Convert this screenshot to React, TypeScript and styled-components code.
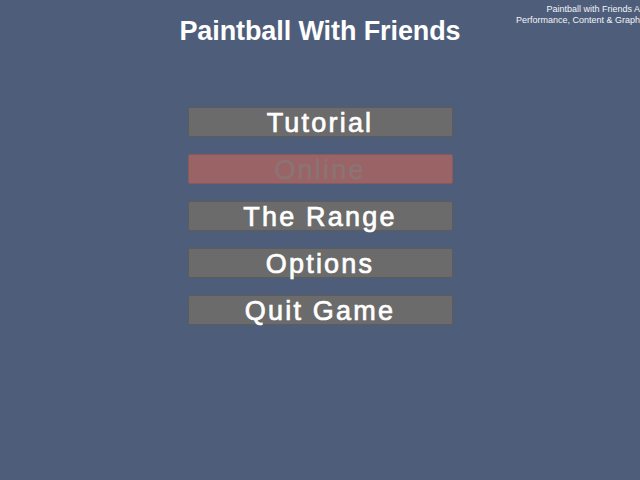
import React from 'react'
import styled, { createGlobalStyle } from 'styled-components'

const menuItems = [
  { label: 'Tutorial', disabled: false },
  { label: 'Online', disabled: true },
  { label: 'The Range', disabled: false },
  { label: 'Options', disabled: false },
  { label: 'Quit Game', disabled: false },
]

const App = () => {
  return (
    <Screen>
      <GlobalStyle />
      <BuildInfo>
        <div>Paintball with Friends A</div>
        <div>Performance, Content &amp; Graph</div>
      </BuildInfo>
      <Title>Paintball With Friends</Title>
      <Menu>
        {menuItems.map((item) => (
          <MenuButton key={item.label} $disabled={item.disabled}>
            {item.label}
          </MenuButton>
        ))}
      </Menu>
    </Screen>
  )
}

export default App

const GlobalStyle = createGlobalStyle`
    html, body {
        margin: 0;
        padding: 0;
        background: #4e5e7a;
    }
`

const Screen = styled.div`
    position: relative;
    width: 640px;
    height: 480px;
    overflow: hidden;
    background: #4e5e7a;
    display: flex;
    flex-direction: column;
    align-items: center;
    font-family: "Liberation Sans", Arial, sans-serif;
`

const BuildInfo = styled.div`
    position: absolute;
    top: 4px;
    right: 0;
    color: #f2f4f8;
    font-size: 9px;
    line-height: 11px;
    text-align: right;
    white-space: nowrap;
`

const Title = styled.h1`
    margin: 16px 0 0;
    color: #ffffff;
    font-size: 27px;
    font-weight: 700;
    line-height: 30px;
    letter-spacing: -0.1px;
`

const Menu = styled.div`
    margin-top: 61px;
    display: flex;
    flex-direction: column;
    gap: 17px;
`

const MenuButton = styled.div<{ $disabled: boolean }>`
    box-sizing: border-box;
    width: 265px;
    height: 30px;
    padding-top: 2px;
    display: flex;
    align-items: center;
    justify-content: center;
    background: ${(p) => (p.$disabled ? '#9a6365' : '#6b6b6b')};
    border: 1px solid ${(p) => (p.$disabled ? '#865a5e' : '#5c5c5c')};
    border-radius: 2px;
    color: ${(p) => (p.$disabled ? '#8c7374' : '#ffffff')};
    -webkit-text-stroke: 0.7px ${(p) => (p.$disabled ? '#8c7374' : '#ffffff')};
    font-size: 27px;
    font-weight: 400;
    letter-spacing: 2.2px;
`
